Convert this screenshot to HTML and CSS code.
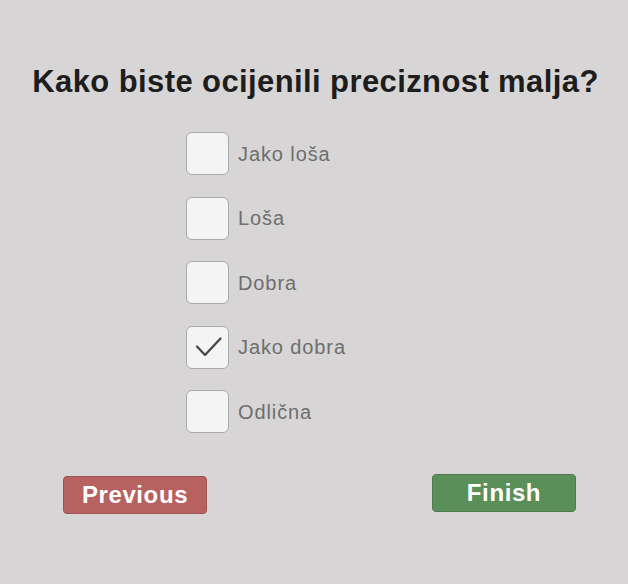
FILE: index.html
```html
<!DOCTYPE html>
<html lang="hr">
<head>
<meta charset="utf-8">
<title>Anketa</title>
<link rel="stylesheet" href="styles.css">
</head>
<body>
<main class="panel">
  <h1 class="question">Kako biste ocijenili preciznost malja?</h1>
  <ul class="options">
    <li class="option"><span class="box"></span><span class="label">Jako loša</span></li>
    <li class="option"><span class="box"></span><span class="label">Loša</span></li>
    <li class="option"><span class="box"></span><span class="label">Dobra</span></li>
    <li class="option"><span class="box"><svg class="check" viewBox="0 0 43 43" width="43" height="43"><path d="M11 21.5 L19 30 L34.5 13.5" fill="none" stroke="#474747" stroke-width="2.3" stroke-linecap="round" stroke-linejoin="round"/></svg></span><span class="label">Jako dobra</span></li>
    <li class="option"><span class="box"></span><span class="label">Odlična</span></li>
  </ul>
  <div class="actions">
    <button class="btn btn-prev">Previous</button>
    <button class="btn btn-finish">Finish</button>
  </div>
</main>
</body>
</html>
```
FILE: styles.css
```css
html, body {
  margin: 0;
  padding: 0;
}
body {
  background: #d7d5d6;
  width: 628px;
  height: 584px;
  overflow: hidden;
  font-family: "Liberation Sans", Arial, sans-serif;
}
.panel {
  padding-top: 64px;
}
.question {
  margin: 0;
  font-size: 31px;
  line-height: 36px;
  font-weight: bold;
  letter-spacing: 0.4px;
  color: #1d1d1d;
  text-align: center;
  padding-left: 3px;
}
.options {
  list-style: none;
  margin: 32px 0 0 0;
  padding: 0 0 0 186px;
  display: flex;
  flex-direction: column;
  gap: 21.5px;
}
.option {
  display: flex;
  align-items: center;
  gap: 9px;
  height: 43px;
}
.box {
  box-sizing: border-box;
  width: 43px;
  height: 43px;
  border: 1.5px solid #a9a9a9;
  border-radius: 6px;
  background: #f4f4f4;
  position: relative;
  flex: none;
}
.check {
  position: absolute;
  left: -1.5px;
  top: -1.5px;
}
.label {
  font-size: 20px;
  letter-spacing: 0.9px;
  color: #6e6e6e;
  line-height: 24px;
}
.actions {
  display: flex;
  justify-content: space-between;
  align-items: flex-start;
  margin-top: 42px;
  padding: 0 52px 0 63px;
}
.btn {
  width: 144px;
  height: 38px;
  border-radius: 4px;
  font-family: "Liberation Sans", Arial, sans-serif;
  font-weight: bold;
  font-size: 24px;
  letter-spacing: 0.6px;
  color: #ffffff;
  padding: 0;
  box-sizing: border-box;
  cursor: pointer;
}
.btn-prev {
  background: #b76261;
  border: 1px solid #9d5352;
  margin-top: 1px;
}
.btn-finish {
  background: #5b8f59;
  border: 1px solid #4e7c4c;
  margin-top: -1px;
}
```
